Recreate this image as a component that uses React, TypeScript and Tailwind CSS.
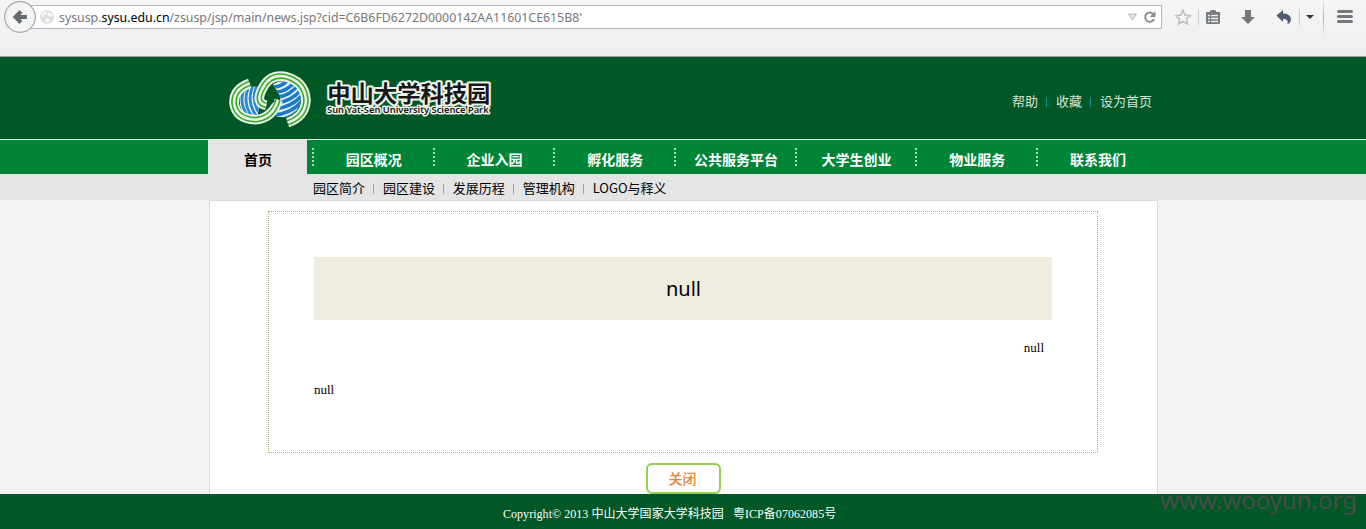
import type { ReactNode } from 'react';

const NAV = ['园区概况', '企业入园', '孵化服务', '公共服务平台', '大学生创业', '物业服务', '联系我们'];
const SUBNAV = ['园区简介', '园区建设', '发展历程', '管理机构', 'LOGO与释义'];
const TOP_LINKS = ['帮助', '收藏', '设为首页'];

function BrowserBar() {
  return (
    <div className="relative flex h-[57px] items-start border-b border-[#a0a0a0] bg-linear-to-b from-[#f5f5f5] to-[#eeeeee]">
      <svg className="relative z-10 ml-[3px] mt-px shrink-0" width="34" height="34" viewBox="0 0 34 34">
        <circle cx="17" cy="16" r="15.3" fill="#f4f4f4" stroke="#a3a5a8" strokeWidth="1.2" />
        <path d="M12 16h12M18 10.500 12.500 16l5.500 5.500" fill="none" stroke="#666b72" strokeWidth="4" />
      </svg>
      <div className="-ml-[7px] mt-[5px] flex h-6 w-[1132px] shrink-0 items-center border border-[#b2b8c8] bg-white pl-[9px]">
        <svg className="shrink-0" width="14" height="14" viewBox="0 0 14 14">
          <circle cx="7" cy="7" r="7" fill="#dfdfdf" />
          <path d="M1.5 4 4 1.5 7 2 6 4.5 4 5 4.5 7 2.5 7ZM8.5 2l3 1.5L13 7l-2-1-2 1-1.5-2ZM6 8l3.5 1L9 11.5 6.5 13 5 10Z" fill="#f8f8f8" />
        </svg>
        <span className="ml-[5px] whitespace-pre font-['Noto_Sans','Open_Sans',sans-serif] text-[12px] leading-[22px] text-[#777]">
          <svg width="526" height="22" className="block">
            <text x="0" y="16" textLength="523" lengthAdjust="spacingAndGlyphs" fill="#777">
              sysusp.<tspan fill="#000">sysu.edu.cn</tspan>/zsusp/jsp/main/news.jsp?cid=C6B6FD6272D0000142AA11601CE615B8'
            </text>
          </svg>
        </span>
        <svg className="ml-auto mr-[4px] shrink-0" width="30" height="16" viewBox="0 0 30 16">
          <path d="M1.500 5h8L5.500 11Z" fill="#e2e6ed" stroke="#aeb5bf" />
          <path d="M26.500 5.500A4.600 4.600 0 1 0 27 10" fill="none" stroke="#88919d" strokeWidth="2" />
          <path d="M28.500 2v6h-6Z" fill="#88919d" />
        </svg>
      </div>
      <svg className="shrink-0" width="204" height="36" viewBox="1162 0 204 36">
        <defs>
          <linearGradient id="divider" x2="0" y2="1">
            <stop offset="0" stopColor="#b7c0ca" stopOpacity=".2" />
            <stop offset=".5" stopColor="#a6b1be" />
            <stop offset="1" stopColor="#b7c0ca" stopOpacity=".2" />
          </linearGradient>
        </defs>
        <path d="m1183 10.500 2.100 4.600 5 .5-3.700 3.400 1 5-4.400-2.600-4.400 2.600 1-5-3.700-3.400 5-.5Z" fill="#f8f8f8" stroke="#c2c2c2" strokeWidth="1.800" />
        <path d="M1198.500 9v16M1299.500 9v16" stroke="#c9cdd2" />
        <path d="M1206 12h4v-1.500h1.500V10h3v.5h1.500V12h4v10.500q0 1.500-1.500 1.500h-11q-1.500 0-1.500-1.500Z" fill="#74787f" />
        <path d="M1208 15.500h2m1 0h7m-10 3h2m1 0h7m-10 3h2m1 0h7" stroke="#f0f0f0" strokeWidth="1.500" />
        <path d="M1245 10h6v7h4l-7 7-7-7h4Z" fill="#74787f" />
        <path d="m1276.500 15.500 6.500-5.500v3.500c5 0 8 2.500 8 6 0 2.500-1.500 4-4 4.500 1.800-2.500.5-5-4-5v3Z" fill="#4f5d6e" />
        <path d="M1306 15h8l-4 4Z" fill="#333" />
        <path d="M1323 0h1v35h-1Z" fill="url(#divider)" />
        <path d="M1338.500 11.500h13m-13 5h13m-13 5h13" stroke="#74787f" strokeWidth="3" strokeLinecap="round" />
      </svg>
    </div>
  );
}

const LEFT_BAND = 'M72 49Q24 66 25 108Q31 156 90 158Q142 153 157 98';
const RIGHT_BAND = 'M122 115Q88 108 109 67Q130 22 175 28Q238 42 241 100Q238 150 186 167';

function Band({ d }: { d: string }) {
  return (
    <g fill="none">
      <path d={d} stroke="#e9f0e5" strokeWidth="29" />
      <path d={d} stroke="#35ab26" strokeWidth="17" />
      <path d={d} stroke="#eef4ea" strokeWidth="7.500" />
    </g>
  );
}

function Logo() {
  return (
    <svg className="mt-[3px] shrink-0" width="290" height="79" viewBox="0 0 870 237">
      <defs>
        <clipPath id="leftGlobe"><path d="M98 60Q72 54 52 74Q32 100 50 132Q66 148 96 146L100 118Q84 98 98 60Z" /></clipPath>
        <clipPath id="rightGlobe"><path d="M142 52Q160 40 182 43Q224 54 226 96Q220 138 186 149Q164 154 144 145L160 124L164 88Z" /></clipPath>
      </defs>
      <g transform="translate(32 21)">
        <g clipPath="url(#leftGlobe)">
          <path d="M30 50h80v100H30Z" fill="#e8f5fa" />
          <path d="M58 60q-22 42 8 88M70 57q-22 48 9 92M82 55q-22 50 12 94M94 55q-22 48 12 90" fill="none" stroke="#2c88ce" strokeWidth="8.500" />
        </g>
        <g clipPath="url(#rightGlobe)">
          <path d="M135 35h100v125H135Z" fill="#e8f5fa" />
          <path d="M138 60q26 2 48-20M145 75q36 2 64-32M152 91q42-3 70-43M152 108q48-5 80-46M148 126q53-6 86-46M144 144q58-5 90-48M158 158q45-4 72-40" fill="none" stroke="#1b79c9" strokeWidth="11" />
        </g>
        <Band d={LEFT_BAND} />
        <Band d={RIGHT_BAND} />
        <path d="M128 105l17-17 1 15-18 20Z" fill="#005826" />
      </g>
      <g stroke="#eef4eb" paintOrder="stroke" strokeLinejoin="round" fill="#171717">
        <text x="337" y="127" fontSize="67" fontWeight="600" textLength="489" lengthAdjust="spacingAndGlyphs" strokeWidth="12" fontFamily="'Noto Sans CJK SC', sans-serif">中山大学科技园</text>
        <text x="336" y="160" fontSize="26" fontWeight="600" textLength="485" lengthAdjust="spacingAndGlyphs" strokeWidth="9" fontFamily="'Noto Sans', sans-serif">Sun Yat-Sen University Science Park</text>
      </g>
    </svg>
  );
}

function Divided({ items, className, bar }: { items: string[]; className: string; bar: string }) {
  return (
    <div className={className}>
      {items.map((item, i): ReactNode => (
        <div key={item} className="flex h-[19px] items-center">
          {i > 0 && <i className={bar} />}
          <a>{item}</a>
        </div>
      ))}
    </div>
  );
}

function Dots() {
  return (
    <div className="flex w-[2px] shrink-0 flex-col gap-[2px] pt-2">
      {[0, 1, 2, 3, 4].map((n) => <i key={n} className="size-[2px] bg-[#a6dcb9]" />)}
    </div>
  );
}

export default function App() {
  return (
    <div className="relative flex h-[529px] w-[1366px] flex-col overflow-hidden bg-[#f2f2f2] font-['Liberation_Serif','Noto_Sans_CJK_SC',serif] text-black">
      <BrowserBar />
      <header className="flex h-[83px] items-start justify-between border-b border-[#e8f5ec] bg-[#005826] pl-[215px] pr-[214px]">
        <Logo />
        <Divided
          items={TOP_LINKS}
          className="mt-[34px] flex font-['Noto_Sans_CJK_SC',sans-serif] text-[13px] leading-[19px] text-[#d8e3db]"
          bar="mr-[9px] ml-[8px] mt-[3px] h-[10px] w-px bg-[#0c9595]"
        />
      </header>
      <nav className="flex h-[34px] bg-[#008437] pl-[208px] font-['Noto_Sans_CJK_SC',sans-serif] text-[14px] font-bold leading-[20px] text-white">
        <a className="mr-[5px] w-[99px] bg-[#e4e4e4] pl-px pt-[9px] text-center text-black">首页</a>
        {NAV.map((item) => (
          <div key={item} className="flex w-[120.7px] shrink-0">
            <Dots />
            <a className="flex-1 pl-px pt-[9px] text-center">{item}</a>
          </div>
        ))}
      </nav>
      <Divided
        items={SUBNAV}
        className="flex h-[26px] bg-[#e4e4e4] pl-[313px] pt-[4px] font-['Noto_Sans_CJK_SC',sans-serif] text-[13px] leading-[19px]"
        bar="mr-[8.900px] ml-[8px] mt-[3px] h-[10px] w-px bg-[#60b4dd]"
      />
      <main className="ml-[209px] flex h-[294px] w-[949px] flex-col border-x border-t border-[#dadada] bg-white pl-[58px] pt-[10px]">
        <section className="flex h-[242px] w-[830px] shrink-0 flex-col border border-dotted border-[#99b853] px-[45px] pt-[45px] text-[13px] leading-4">
          <h1 className="flex h-[63px] items-center justify-center bg-[#eeebdf] pl-px font-['Noto_Sans','Open_Sans',sans-serif] text-[20px]">null</h1>
          <p className="mr-2 mt-5 text-right">null</p>
          <p className="mt-[26px]">null</p>
        </section>
        <button className="ml-[378px] mt-[10px] h-[31px] w-[75px] shrink-0 rounded-md border-2 border-[#92d050] bg-white pb-[2px] pr-[2px] font-['Noto_Sans_CJK_SC',sans-serif] text-[14px] font-medium leading-[24px] text-[#e48437]">关闭</button>
      </main>
      <footer className="flex h-[35px] whitespace-pre bg-[#005826] pl-[503px] pt-[11px] text-[12px] leading-[19px] tracking-[0.04px] text-white">
        Copyright© 2013 中山大学国家大学科技园   粤ICP备07062085号
      </footer>
      <div className="absolute right-[9px] top-[484px] font-['Noto_Sans',sans-serif] text-[24px] leading-[32px] text-[#4b4b4b]">www.wooyun.org</div>
    </div>
  );
}
